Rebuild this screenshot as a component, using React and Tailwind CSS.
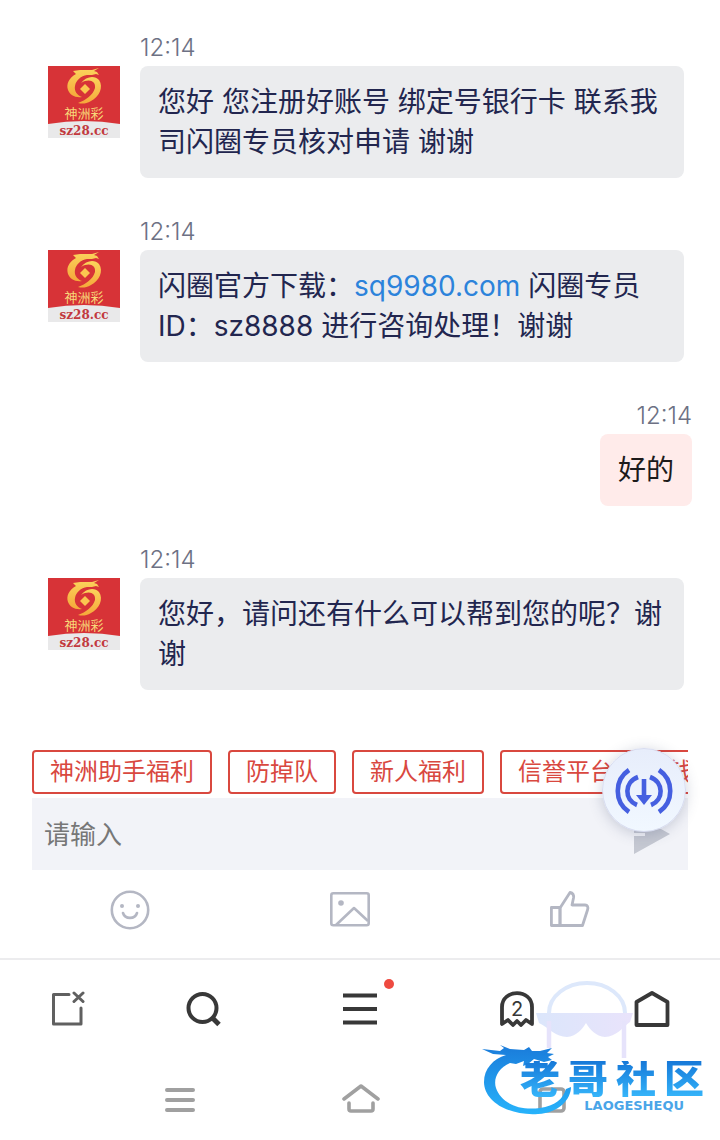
const messages = [
    { id: 1, time: '12:14', text: '您好 您注册好账号 绑定号银行卡 联系我司闪圈专员核对申请 谢谢' },
    {
        id: 2,
        time: '12:14',
        text: '闪圈官方下载：',
        link: 'sq9980.com',
        rest: ' 闪圈专员 ID：sz8888 进行咨询处理！谢谢',
    },
    { id: 3, time: '12:14', text: '好的', mine: true },
    { id: 4, time: '12:14', text: '您好，请问还有什么可以帮到您的呢？谢谢' },
]

const quickReplies = ['神洲助手福利', '防掉队', '新人福利', '信誉平台 好赚钱']

function Avatar() {
    return (
        <svg viewBox="0 0 72 72" className="mt-9 size-[72px] shrink-0" role="img" aria-label="神洲彩">
            <defs>
                <linearGradient id="gold" x1="0" y1="0" x2="0" y2="1">
                    <stop offset="0" stopColor="#fbd45c" />
                    <stop offset="1" stopColor="#f5a83a" />
                </linearGradient>
            </defs>
            <rect width="72" height="72" fill="#d73337" />
            <path d="M0 58Q36 52 72 58V72H0Z" fill="#e9e9ea" />
            <path
                d="M51 2L44 4L32 4L25 5L28 8C21 12 18 18 20 24C22 29 27 32 34 31C29 29 26 25 27 20C28 14 33 10 39 9L44 9L48 8L51 9L49 6L46 5Z"
                fill="url(#gold)"
            />
            <path
                d="M33 17C38 10 47 9 51 14C56 21 51 31 43 35C38 38 34 38 30 37C38 34 45 29 47 22C48 15 41 12 33 17Z"
                fill="url(#gold)"
            />
            <path d="M37 18L42 23L37 28L32 23Z" fill="#fbc750" />
            <text x="36" y="52" textAnchor="middle" fontSize="13" fill="#f7d878">神洲彩</text>
            <text x="36" y="69" textAnchor="middle" fontSize="12" fontWeight="700" fill="#c23a3f" className="font-['DejaVu_Serif',serif]">
                sz28.cc
            </text>
        </svg>
    )
}

function Message({ message }) {
    const { time, text, link, rest, mine } = message
    return (
        <li className={mine ? 'flex justify-end pr-7' : 'flex gap-5 pr-9 pl-12'}>
            {!mine && <Avatar />}
            <div className={mine ? 'text-right' : 'flex-1'}>
                <time className="block text-2xl leading-9 font-light text-[#6d7184]">{time}</time>
                <p
                    className={
                        mine
                            ? 'rounded-lg bg-[#ffebea] px-[18px] py-4 text-[28px] leading-10 text-[#1d1b1b]'
                            : 'rounded-lg bg-[#ebecee] px-[18px] py-4 text-[28px] leading-10 text-[#22264f]'
                    }
                >
                    {text}
                    {link && <a href={'https://' + link} className="text-[#2c83db]">{link}</a>}
                    {rest}
                </p>
            </div>
        </li>
    )
}

function SmileIcon() {
    return (
        <svg viewBox="0 0 40 40" className="size-10" fill="none" stroke="#b4b7c3" strokeWidth="2.6" strokeLinecap="round">
            <circle cx="20" cy="20" r="18.2" />
            <path d="M13 23C15 29.5 25 29.5 27 23" />
            <circle cx="12" cy="16" r="2" fill="#b4b7c3" stroke="none" />
            <circle cx="28" cy="16" r="2" fill="#b4b7c3" stroke="none" />
        </svg>
    )
}

function ImageIcon() {
    return (
        <svg viewBox="0 0 40 40" className="size-10" fill="none" stroke="#b4b7c3" strokeWidth="2.6" strokeLinejoin="round">
            <rect x="1.3" y="3.3" width="37.4" height="32" rx="2" />
            <path d="M6 35L24 18L38 31" />
            <circle cx="11" cy="13" r="2.8" fill="#b4b7c3" stroke="none" />
        </svg>
    )
}

function ThumbIcon() {
    return (
        <svg viewBox="0 0 40 40" className="size-10" fill="none" stroke="#b4b7c3" strokeWidth="2.8" strokeLinejoin="round">
            <path d="M1.4 17.5H10V35.5H1.4Z" />
            <path d="M10 18L20 2.5C23 3 24 5 23.5 8L22 15H35C37.5 15 38.5 17 37.5 20L32.5 35.5H10Z" />
        </svg>
    )
}

function Composer() {
    return (
        <section className="relative mt-[60px]">
            <div className="mx-8 flex gap-4 overflow-hidden">
                {quickReplies.map((reply) => (
                    <button
                        key={reply}
                        type="button"
                        className="h-11 shrink-0 rounded border-2 border-[#d9483f] px-4 text-2xl leading-8 whitespace-nowrap text-[#d9483f]"
                    >
                        {reply}
                    </button>
                ))}
            </div>
            <form className="mx-8 mt-1 flex h-[72px] items-center bg-[#f2f3f8] pr-[18px] pl-3">
                <input
                    type="text"
                    aria-label="请输入"
                    placeholder="请输入"
                    className="h-full min-w-0 flex-1 bg-transparent text-[26px] outline-none placeholder:text-[#777777]"
                />
                <button type="button" aria-label="发送">
                    <svg viewBox="0 0 36 40" className="h-10 w-9" fill="#c5c8d2">
                        <path d="M0 0L36 20L0 40V22H11V19H0Z" />
                    </svg>
                </button>
            </form>
            <div className="mr-10 ml-5 grid h-[88px] grid-cols-3 place-items-center pb-2">
                <button type="button" aria-label="表情"><SmileIcon /></button>
                <button type="button" aria-label="图片"><ImageIcon /></button>
                <button type="button" aria-label="点赞"><ThumbIcon /></button>
            </div>
            <button
                type="button"
                aria-label="下载"
                className="absolute -top-0.5 right-[34px] size-[84px] rounded-full border border-[#d7dcf0] bg-linear-to-b from-[#e7edfb] to-[#f1f8ff] shadow-[0_2px_14px_rgba(60,70,110,0.25)]"
            >
                <svg viewBox="0 0 82 82" className="size-full" fill="none" stroke="#455fe0" strokeWidth="4.6">
                    <path d="M26 21C11 31 11 53 26 63" />
                    <path d="M35 28C21 33 21 51 34 56" />
                    <path d="M56 21C71 31 71 53 56 63" />
                    <path d="M47 28C61 33 61 51 48 56" />
                    <path d="M41 30V48" />
                    <path d="M33 46H49L41 56Z" fill="#455fe0" stroke="none" />
                </svg>
            </button>
        </section>
    )
}

function BrowserBar() {
    return (
        <nav className="flex h-[98px] items-center justify-between px-[50px]">
            <button type="button" aria-label="关闭标签页">
                <svg viewBox="0 0 36 36" className="size-9" fill="none" stroke="#606060" strokeWidth="3" strokeLinecap="round" strokeLinejoin="round">
                    <path d="M19 3.5H3.5V33H31V17" />
                    <path d="M24 2L33 10.5M33 2L24 10.5" />
                </svg>
            </button>
            <button type="button" aria-label="搜索">
                <svg viewBox="0 0 36 36" className="size-9" fill="none" stroke="#383838" strokeWidth="4">
                    <circle cx="17.5" cy="17" r="14" />
                    <path d="M27.5 27L34 33.5" strokeWidth="5" />
                </svg>
            </button>
            <button type="button" aria-label="菜单" className="relative flex w-20 justify-center">
                <svg viewBox="0 0 36 36" className="size-9" fill="none" stroke="#383838" strokeWidth="4">
                    <path d="M1 4.5H35M1 18H35M1 31.5H35" />
                </svg>
                <span className="absolute -top-3 right-1.5 size-2.5 rounded-full bg-[#ee4a40]" />
            </button>
            <button type="button" aria-label="标签页" className="grid place-items-center">
                <svg viewBox="0 0 36 36" className="col-start-1 row-start-1 size-9" fill="none" stroke="#383838" strokeWidth="3.8" strokeLinejoin="round">
                    <path d="M3 33V16C3 -2.5 33 -2.5 33 16V33L27 29L22 34L18 30L14 34L9 29Z" />
                </svg>
                <span className="col-start-1 row-start-1 text-xl leading-6 text-[#383838]">2</span>
            </button>
            <button type="button" aria-label="主页">
                <svg viewBox="0 0 36 36" className="size-9" fill="none" stroke="#383838" strokeWidth="3.8" strokeLinejoin="round">
                    <path d="M2.5 11L18 2L33.5 11V34H2.5Z" />
                </svg>
            </button>
        </nav>
    )
}

function SystemBar() {
    return (
        <nav className="flex h-[82px] items-center justify-between pr-[154px] pl-[165px]">
            <button type="button" aria-label="最近任务">
                <svg viewBox="0 0 30 28" className="h-7 w-[30px]" stroke="#a0a0a0" strokeWidth="4" strokeLinecap="round">
                    <path d="M2 5H28M2 15H28M2 25H28" />
                </svg>
            </button>
            <button type="button" aria-label="桌面">
                <svg viewBox="0 0 38 30" className="h-[30px] w-[38px]" fill="none" stroke="#a0a0a0" strokeWidth="3.6" strokeLinecap="round" strokeLinejoin="round">
                    <path d="M2 15L19 2L36 15" />
                    <path d="M7 19V25Q7 27 9 27H29Q31 27 31 25V19" />
                </svg>
            </button>
            <button type="button" aria-label="返回">
                <svg viewBox="0 0 40 28" className="h-7 w-10" fill="none" stroke="#a0a0a0" strokeWidth="3.6">
                    <rect x="14" y="4" width="24" height="22" rx="3" />
                </svg>
            </button>
        </nav>
    )
}

function CommunityLogo() {
    return (
        <div className="pointer-events-none absolute top-[15px] right-4 h-[148px] w-56">
            <svg viewBox="0 0 224 148" className="absolute inset-0 size-full">
                <defs>
                    <linearGradient id="dragon" x1="0" y1="0" x2="0" y2="1">
                        <stop offset="0" stopColor="#1a7bda" />
                        <stop offset="1" stopColor="#27b3fb" />
                    </linearGradient>
                    <linearGradient id="shades" x1="0" y1="0" x2="1" y2="0">
                        <stop offset="0" stopColor="#dbe6fb" />
                        <stop offset="1" stopColor="#e9e3fb" />
                    </linearGradient>
                </defs>
                <path d="M69 38A38 30 0 0 1 145 38" fill="none" stroke="#dde8fb" strokeWidth="4" />
                <path d="M56 38H153L150 47C143 52 136 62 125 62C116 61 110 55 106 48C102 55 96 61 87 62C76 62 69 53 59 48Z" fill="url(#shades)" />
                <path d="M69 46V73M144 46V83" stroke="#e6e3fb" strokeWidth="4.5" />
                <path
                    d="M2 74L20 76L24 73L20 70L30 74L44 75L49 72L52 76L60 76L72 73L67 78L74 79L68 82L72 85L64 87L54 84L48 89L43 91L44 86L36 89L30 88C18 93 13 104 16 113C21 128 39 136 60 133C75 131 83 124 86 114L91 112C91 124 79 138 58 139C28 141 4 126 4 107C4 94 13 84 26 80L13 79Z"
                    fill="url(#dragon)"
                />
            </svg>
            <div className="absolute top-[86px] right-0 flex w-[184px] justify-between bg-linear-to-b from-[#1778d8] to-[#36b5fa] bg-clip-text text-[40px] leading-9 font-black text-transparent">
                {['老', '哥', '社', '区'].map((char) => (
                    <span key={char}>{char}</span>
                ))}
            </div>
            <div className="absolute top-[125px] right-5 font-['DejaVu_Sans',sans-serif] text-[13px] leading-3 font-bold text-[#4aa5e8]">
                LAOGESHEQU
            </div>
        </div>
    )
}

function App() {
    return (
        <div className="min-h-screen bg-white font-['Inter','Noto_Sans_CJK_SC',sans-serif]" lang="zh-CN">
            <main>
                <ul className="flex flex-col gap-9 pt-[30px]">
                    {messages.map((message) => (
                        <Message key={message.id} message={message} />
                    ))}
                </ul>
                <Composer />
            </main>
            <footer className="relative border-t-2 border-[#ececee]">
                <BrowserBar />
                <SystemBar />
                <CommunityLogo />
            </footer>
        </div>
    )
}

export default App
